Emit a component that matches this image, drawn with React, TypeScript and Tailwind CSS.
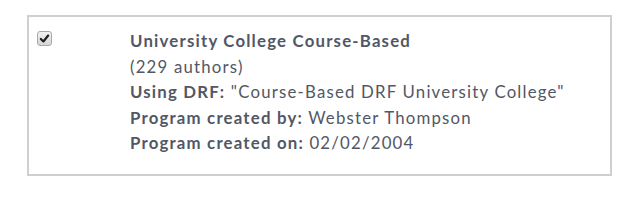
export default function App() {
  return (
    <div className="min-h-screen bg-white pt-[15px] pl-[27px]" style={{ fontFamily: 'Lato, "Open Sans", sans-serif' }}>
      <div className="w-[585px] h-[161px] border-2 border-[#cfcfcf] flex">
        <div className="w-[101px] pl-[8px] pt-[14px]">
          <span className="w-[15px] h-[15px] rounded-[3px] border border-[#a9a9a9] bg-gradient-to-b from-[#f2f2f2] to-[#d6d6d6] flex items-center justify-center">
            <svg viewBox="0 0 12 12" className="w-[11px] h-[11px]">
              <path d="M2 6.5 L4.8 9.2 L10 2.8" fill="none" stroke="#1f1f1f" strokeWidth="2.4" strokeLinecap="round" strokeLinejoin="round" />
            </svg>
          </span>
        </div>
        <div className="pt-[11px] text-[16.8px] leading-[25.6px] tracking-[1.2px] text-[#525765]">
          <p className="font-bold">University College Course-Based</p>
          <p>(229 authors)</p>
          <p><span className="font-bold">Using DRF:</span> "Course-Based DRF University College"</p>
          <p><span className="font-bold">Program created by:</span> Webster Thompson</p>
          <p><span className="font-bold">Program created on:</span> 02/02/2004</p>
        </div>
      </div>
    </div>
  )
}
